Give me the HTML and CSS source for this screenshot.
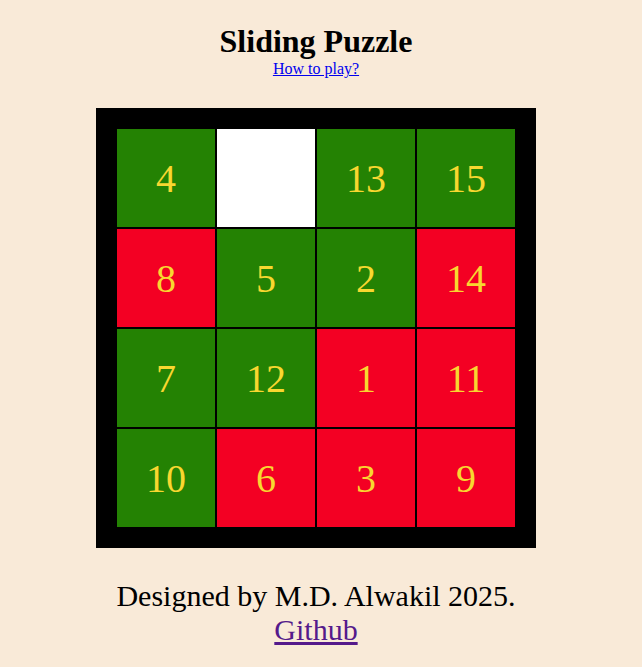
FILE: index.html
```html
<!DOCTYPE html>
<html lang="en">
<head>
<meta charset="utf-8">
<title>Sliding Puzzle</title>
<link rel="stylesheet" href="styles.css">
</head>
<body>
<main class="page">
  <header class="header">
    <h1 class="title">Sliding Puzzle</h1>
    <a class="help-link" href="#">How to play?</a>
  </header>
  <div class="board">
    <div class="tile green">4</div>
    <div class="tile empty"></div>
    <div class="tile green">13</div>
    <div class="tile green">15</div>
    <div class="tile red">8</div>
    <div class="tile green">5</div>
    <div class="tile green">2</div>
    <div class="tile red">14</div>
    <div class="tile green">7</div>
    <div class="tile green">12</div>
    <div class="tile red">1</div>
    <div class="tile red">11</div>
    <div class="tile green">10</div>
    <div class="tile red">6</div>
    <div class="tile red">3</div>
    <div class="tile red">9</div>
  </div>
  <footer class="footer">
    <p class="credit">Designed by M.D. Alwakil 2025.<br><a class="gh-link" href="#">Github</a></p>
  </footer>
</main>
</body>
</html>
```
FILE: styles.css
```css
html, body {
  background: #f9ead8;
}
body {
  margin: 8px;
  font-family: "Liberation Serif", "Times New Roman", serif;
  color: #000;
}
.page {
  margin-right: 10px;
  display: flex;
  flex-direction: column;
  align-items: center;
  text-align: center;
}
.header {
  display: flex;
  flex-direction: column;
  align-items: center;
}
.title {
  font-size: 32px;
  font-weight: bold;
  margin: 15.44px 0 0;
}
.help-link {
  font-size: 16px;
  color: #0000ee;
  text-decoration: underline;
}
.board {
  margin-top: 30px;
  width: 398px;
  padding: 21px;
  background: #000;
  display: grid;
  grid-template-columns: repeat(4, 98px);
  grid-auto-rows: 98px;
  gap: 2px;
}
.tile {
  display: flex;
  align-items: center;
  justify-content: center;
  font-size: 40px;
  color: #f8d730;
}
.green { background: #248203; }
.red { background: #f30023; }
.empty { background: #ffffff; }
.footer {
  margin-top: 31px;
}
.credit {
  margin: 0;
  font-size: 30px;
}
.gh-link {
  color: #551a8b;
  text-decoration: underline;
}
```
